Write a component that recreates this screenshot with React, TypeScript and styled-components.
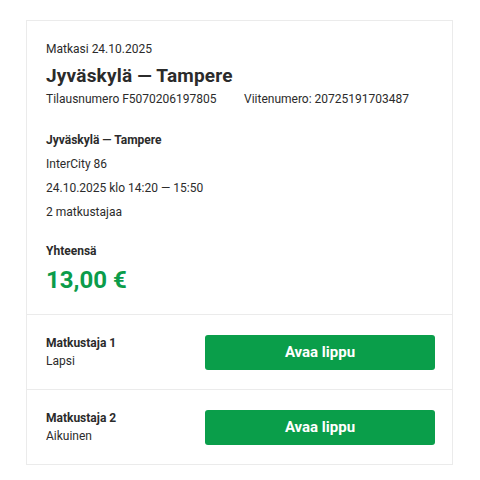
import React from "react";
import styled, { createGlobalStyle } from "styled-components";

const GlobalStyle = createGlobalStyle`
  html, body {
    margin: 0;
    padding: 0;
    background: #fff;
  }
  body {
    font-family: Roboto, "Liberation Sans", Arial, sans-serif;
    color: #2b2b2b;
  }
`;

const Page = styled.div`
  width: 480px;
  min-height: 480px;
  padding: 20px 0 0 26px;
  box-sizing: border-box;
`;

const Card = styled.div`
  width: 427px;
  box-sizing: border-box;
  border: 1px solid #ebebeb;
  background: #fff;
`;

const Summary = styled.section`
  padding: 19px 19px 19px;
`;

const Small = styled.div`
  font-size: 12px;
  line-height: 18px;
`;

const Title = styled.h1`
  margin: 6px 0 2px;
  font-size: 19px;
  line-height: 24px;
  letter-spacing: 0.2px;
  font-weight: 700;
`;

const RefRow = styled.div`
  display: flex;
  font-size: 12px;
  line-height: 18px;
`;

const RefItem = styled.span`
  width: 198px;
`;

const Details = styled.div`
  margin-top: 20px;
`;

const DetailLine = styled.div<{ $bold?: boolean }>`
  font-size: 12px;
  line-height: 24px;
  font-weight: ${(p) => (p.$bold ? 700 : 400)};
`;

const TotalLabel = styled.div`
  margin-top: 18px;
  font-size: 12px;
  line-height: 18px;
  font-weight: 700;
`;

const Price = styled.div`
  margin-top: 5px;
  font-size: 24px;
  line-height: 30px;
  font-weight: 700;
  color: #0b9c4a;
`;

const PassengerRow = styled.div`
  display: flex;
  align-items: center;
  justify-content: space-between;
  padding: 19px 17px 19px 19px;
  border-top: 1px solid #ebebeb;
`;

const PassengerInfo = styled.div`
  font-size: 12px;
  line-height: 18px;
`;

const PassengerName = styled.div`
  font-weight: 700;
`;

const OpenButton = styled.button`
  width: 230px;
  height: 35px;
  border: none;
  border-radius: 3px;
  background: #0a9e4a;
  color: #fff;
  font-family: inherit;
  font-size: 15px;
  font-weight: 700;
  cursor: pointer;
`;

const passengers = [
  { name: "Matkustaja 1", type: "Lapsi" },
  { name: "Matkustaja 2", type: "Aikuinen" },
];

const App: React.FC = () => {
  return (
    <>
      <GlobalStyle />
      <Page>
        <Card>
          <Summary>
            <Small>Matkasi 24.10.2025</Small>
            <Title>Jyväskylä — Tampere</Title>
            <RefRow>
              <RefItem>Tilausnumero F5070206197805</RefItem>
              <span>Viitenumero: 20725191703487</span>
            </RefRow>
            <Details>
              <DetailLine $bold>Jyväskylä — Tampere</DetailLine>
              <DetailLine>InterCity 86</DetailLine>
              <DetailLine>24.10.2025 klo 14:20 — 15:50</DetailLine>
              <DetailLine>2 matkustajaa</DetailLine>
            </Details>
            <TotalLabel>Yhteensä</TotalLabel>
            <Price>13,00 €</Price>
          </Summary>
          {passengers.map((p) => (
            <PassengerRow key={p.name}>
              <PassengerInfo>
                <PassengerName>{p.name}</PassengerName>
                <div>{p.type}</div>
              </PassengerInfo>
              <OpenButton>Avaa lippu</OpenButton>
            </PassengerRow>
          ))}
        </Card>
      </Page>
    </>
  );
};

export default App;
